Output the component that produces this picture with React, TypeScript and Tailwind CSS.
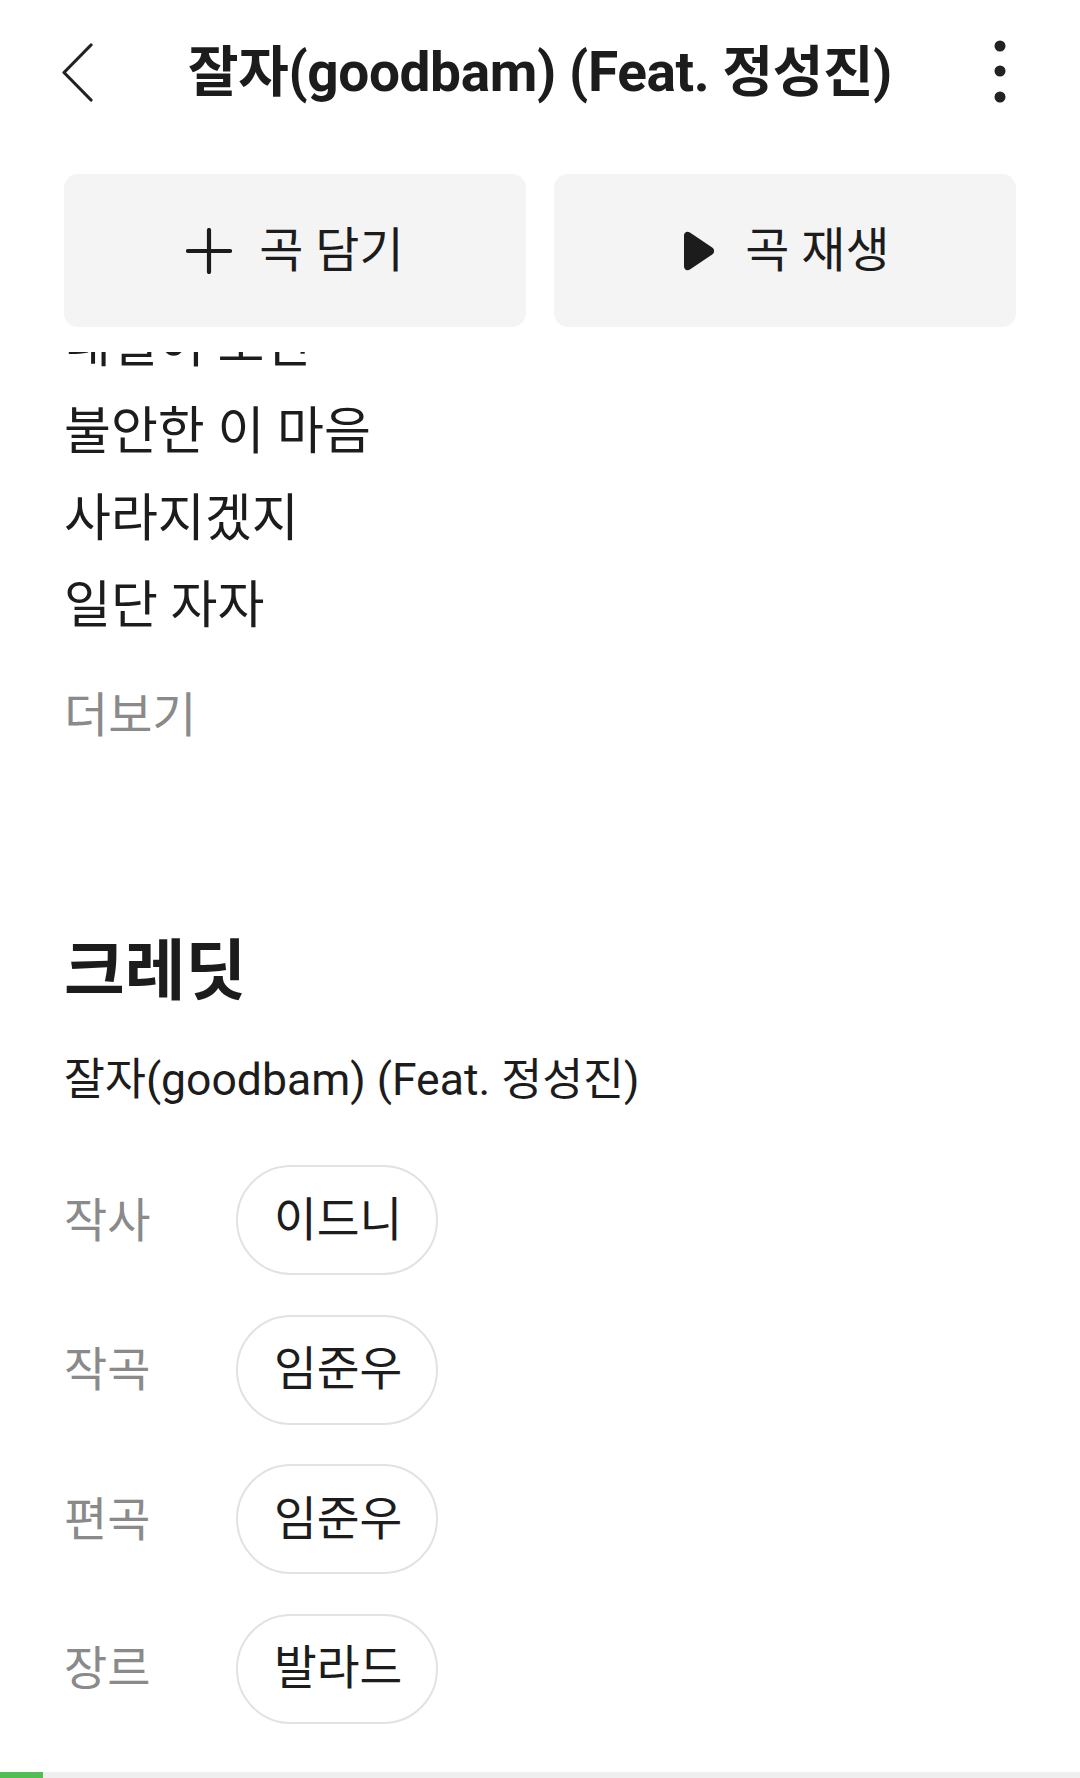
import React from "react";

const FONT = { fontFamily: 'Roboto, "Noto Sans CJK KR", "Noto Sans", sans-serif' };

function Chevron() {
  return (
    <svg width="33" height="59" viewBox="0 0 33 59" fill="none">
      <path d="M30 2 L3 29.5 L30 57" stroke="#222222" strokeWidth="3.2" strokeLinecap="round" strokeLinejoin="round" />
    </svg>
  );
}

function Kebab() {
  return (
    <svg width="12" height="64" viewBox="0 0 12 64" fill="#222222">
      <circle cx="6" cy="6" r="5.5" />
      <circle cx="6" cy="31" r="5.5" />
      <circle cx="6" cy="57" r="5.5" />
    </svg>
  );
}

function Plus() {
  return (
    <svg width="46" height="46" viewBox="0 0 46 46" fill="none">
      <path d="M23 2 V44 M2 23 H44" stroke="#1c1c1c" strokeWidth="4.2" strokeLinecap="round" />
    </svg>
  );
}

function Play() {
  return (
    <svg width="36" height="42" viewBox="0 0 36 42" fill="#1c1c1c">
      <path d="M4 5.5 C4 2.2 7.2 0.6 9.9 2.4 L32.2 17.4 C34.7 19.1 34.7 22.9 32.2 24.6 L9.9 39.6 C7.2 41.4 4 39.8 4 36.5 Z" />
    </svg>
  );
}

const lyrics = ["내일이 오면", "불안한 이 마음", "사라지겠지", "일단 자자"];

const credits: [string, string][] = [
  ["작사", "이드니"],
  ["작곡", "임준우"],
  ["편곡", "임준우"],
  ["장르", "발라드"],
];

export default function App() {
  return (
    <div className="w-[1080px] h-[1778px] bg-white flex flex-col overflow-hidden text-[#1c1c1c]" style={FONT}>
      <header className="bg-white relative z-10">
        <div className="h-[144px] flex items-center">
          <div className="w-[180px] pl-[61px] flex items-center">
            <Chevron />
          </div>
          <h1 className="flex-1 text-center text-[55px] font-bold leading-none tracking-[-0.4px] whitespace-nowrap">
            잘자(goodbam) (Feat. 정성진)
          </h1>
          <div className="w-[180px] pr-[74px] flex items-center justify-end">
            <Kebab />
          </div>
        </div>
        <div className="px-[64px] pt-[30px] pb-[25px] grid grid-cols-2 gap-[28px]">
          <button className="h-[153px] rounded-[14px] bg-[#f4f4f4] flex items-center justify-center gap-[27px] text-[48px] leading-none">
            <Plus />
            <span>곡 담기</span>
          </button>
          <button className="h-[153px] rounded-[14px] bg-[#f4f4f4] flex items-center justify-center gap-[29px] text-[48px] leading-none">
            <Play />
            <span>곡 재생</span>
          </button>
        </div>
      </header>

      <main className="flex-1 overflow-hidden">
        <section className="-mt-[51px] px-[64px]">
          {lyrics.map((l, i) => (
            <p key={i} className="text-[51px] leading-[87px] whitespace-pre">
              {l}
            </p>
          ))}
          <p className="mt-[23px] text-[48px] leading-[87px] text-[#8a8a8a]">더보기</p>
        </section>

        <section className="px-[64px] mt-[171px]">
          <h2 className="text-[66px] font-bold leading-[84px]">크레딧</h2>
          <p className="mt-[36px] text-[44.5px] leading-[60px]">잘자(goodbam) (Feat. 정성진)</p>
          <div className="mt-[55px] flex flex-col gap-[39.5px]">
            {credits.map(([k, v]) => (
              <div key={k} className="flex items-center">
                <span className="w-[172px] text-[47px] leading-none text-[#8a8a8a]">{k}</span>
                <span className="h-[110px] pl-[36px] pr-[34px] rounded-full border-2 border-[#e2e2e2] flex items-center text-[46.5px] leading-none">
                  {v}
                </span>
              </div>
            ))}
          </div>
        </section>
      </main>

      <div className="h-[6px] bg-[#efefef] flex">
        <div className="w-[43px] bg-[#4fbf52]" />
      </div>
    </div>
  );
}
